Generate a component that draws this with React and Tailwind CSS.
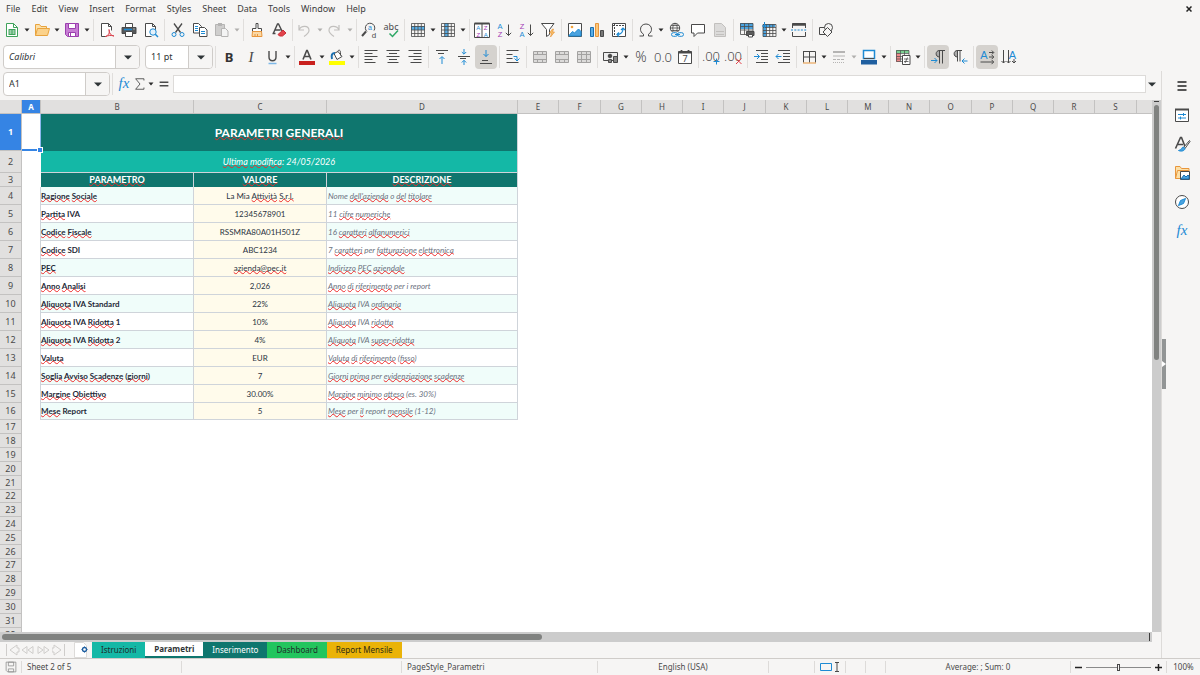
import { useState } from "react";
import clsx from "clsx";

const MENUS = ["File", "Edit", "View", "Insert", "Format", "Styles", "Sheet", "Data", "Tools", "Window", "Help"];

// "~" marks a word that the spell checker underlines
const ROWS = [
  ["~Ragione ~Sociale", "La Mia ~Attività ~S.r.l.", "Nome ~dell'azienda o ~del ~titolare"],
  ["~Partita IVA", "12345678901", "11 ~cifre ~numeriche"],
  ["~Codice ~Fiscale", "RSSMRA80A01H501Z", "16 ~caratteri ~alfanumerici"],
  ["~Codice SDI", "ABC1234", "7 ~caratteri per ~fatturazione ~elettronica"],
  ["~PEC", "~azienda@pec.it", "~Indirizzo ~PEC ~aziendale"],
  ["~Anno ~Analisi", "2,026", "~Anno ~di ~riferimento per i report"],
  ["~Aliquota IVA Standard", "22%", "~Aliquota IVA ~ordinaria"],
  ["~Aliquota IVA ~Ridotta 1", "10%", "~Aliquota IVA ~ridotta"],
  ["~Aliquota IVA ~Ridotta 2", "4%", "~Aliquota IVA ~super-ridotta"],
  ["~Valuta", "EUR", "~Valuta ~di ~riferimento (~fisso)"],
  ["~Soglia ~Avviso ~Scadenze (~giorni)", "7", "~Giorni ~prima per ~evidenziazione ~scadenze"],
  ["~Margine ~Obiettivo", "30.00%", "~Margine ~minimo ~atteso (es. 30%)"],
  ["~Mese Report", "5", "~Mese per ~il report ~mensile (1-12)"],
];

const COLUMNS = "ABCDEFGHIJKLMNOPQRST".split("");
const LAST_ROW = 32;

// sheet sizes are kept in twips, edges are snapped to whole pixels
const SCALE = 0.0459;
const COL_TWIPS = { A: 414, B: 3330, C: 2896, D: 4172 };
const ROW_TWIPS = { 1: 806, 2: 488, 3: 300 };

const colTwips = (c) => COL_TWIPS[c] || 898;
const rowTwips = (r) => ROW_TWIPS[r] || (r <= 16 ? 391 : 301);

function snap(sizes) {
  let sum = 0;
  return sizes.map((s) => {
    const from = Math.round(sum * SCALE);
    sum += s;
    return Math.round(sum * SCALE) - from;
  });
}

const COL_PX = snap(COLUMNS.map(colTwips));
const ROW_PX = snap(Array.from({ length: LAST_ROW }, (_, i) => rowTwips(i + 1)));
const HEAD_W = 22;
const TABLE_W = COL_PX.reduce((a, b) => a + b, HEAD_W);

const K = "#4a4a4a";
const B = "#1e8bd4";

function Svg({ size = 16, children }) {
  return (
    <svg width={size} height={size} viewBox="0 0 16 16" fill="none" stroke={K} strokeWidth="1" aria-hidden="true" className="shrink-0 overflow-visible">
      {children}
    </svg>
  );
}

function Glyph({ x = 8, y = 13, size = 14, fill = K, children, ...rest }) {
  return (
    <text x={x} y={y} fontSize={size} fill={fill} stroke="none" textAnchor="middle" fontFamily="Noto Sans, sans-serif" {...rest}>
      {children}
    </text>
  );
}

function Letter(props) {
  return <Glyph fontFamily="Liberation Sans, sans-serif" {...props} />;
}

const gridLines = "M1.5 1.5h13v13h-13zM1.5 4.5h13M1.5 8h13M1.5 11.5h13M4.7 1.5v13M8 1.5v13M11.3 1.5v13";

const ICONS = {
  new: (
    <>
      <path d="M2.5 1.5h7l4 4v9h-11z" fill="#fff" stroke="#3fa35b" />
      <path d="M9.5 1.5v4h4" stroke="#3fa35b" />
      <path d="M4.5 7h7v6h-7z" fill="#3fa35b" stroke="none" />
      <path d="M5.5 9h2M8.5 9h2M5.5 11h2M8.5 11h2" stroke="#fff" />
    </>
  ),
  open: (
    <>
      <path d="M1.5 13.5v-11h4l1.5 2h5.5v2" fill="#fce0a8" stroke="#e8a33d" />
      <path d="M1.5 13.5l2-7h12l-2 7z" fill="#fbd28b" stroke="#e8a33d" />
    </>
  ),
  save: (
    <>
      <path d="M1.5 1.5h13v13h-11l-2-2z" fill="#c77dd4" stroke="#9b3fae" />
      <path d="M4.5 1.5h7v5h-7z" fill="#fff" stroke="#9b3fae" />
      <path d="M4.5 10.5h7v4h-7z" fill="#fff" stroke="#9b3fae" />
      <path d="M6.5 11v3" stroke="#9b3fae" />
    </>
  ),
  pdf: (
    <>
      <path d="M7.5 14.5h-5v-13h7l3 3v4" fill="#fff" />
      <path d="M9.5 1.5v3h3" />
      <path d="M6.5 14.5c3-1 4.5-4 3.5-7c0 4 2 6 5 6.500c-3-1-6-.5-8.500.5z" stroke="#d9434e" fill="#f6c8cb" />
    </>
  ),
  print: (
    <>
      <path d="M4.5 1.5h7v4h-7z" fill="#fff" />
      <path d="M1 5.500h14v6h-14z" fill="#55585a" />
      <path d="M3 7.500h8" stroke={B} strokeWidth="1.5" />
      <path d="M4.500 9.500h7v5h-7z" fill="#fff" />
      <path d="M12.500 7h1" stroke="#fff" />
    </>
  ),
  preview: (
    <>
      <path d="M8.500 14.500h-6v-13h7l3 3v4" fill="#fff" />
      <path d="M9.500 1.500v3h3" />
      <circle cx="10" cy="10" r="3.2" stroke={B} fill="#e3f1fb" />
      <path d="M12.300 12.300l2.700 2.700" stroke={B} strokeWidth="1.5" />
    </>
  ),
  cut: (
    <>
      <path d="M4 1.500l6.500 9M12 1.500l-6.500 9" strokeWidth="1.3" />
      <circle cx="4" cy="12.5" r="2" stroke={B} />
      <circle cx="12" cy="12.5" r="2" stroke={B} />
    </>
  ),
  copy: (
    <>
      <path d="M1.500 1.500h5l3 3v6.500h-8z" fill="#fff" />
      <path d="M3 4.500h3M3 6.500h3M3 8.500h3" stroke={B} />
      <path d="M7.500 5.500h5l2.500 2.500v6.500h-7.500z" fill="#fff" />
      <path d="M9 9.500h4M9 11.500h4" stroke={B} />
    </>
  ),
  paste: (
    <>
      <path d="M1.500 2.500h9v11h-9z" fill="#cfcecd" stroke="#b5b4b3" />
      <path d="M4 1h4v3h-4z" fill="#b5b4b3" stroke="none" />
      <path d="M7.500 6.500h4l2.500 2.500v5.500h-6.500z" fill="#f4f4f4" stroke="#b5b4b3" />
    </>
  ),
  brush: (
    <>
      <path d="M7 1.500h2v5h3.500v3h-9v-3h3.500z" fill="#fff" />
      <path d="M3.500 9.500h9l.5 5h-10z" fill="#fbd9a6" stroke="#e8963c" />
      <path d="M6 12v2M8.500 12v2" stroke="#e8963c" />
    </>
  ),
  clear: (
    <>
      <path d="M2.500 11l4-9h1l3.500 7M4 8h5.500M1.500 11.500h3" strokeWidth="1.4" />
      <path d="M7 12.500l5-4.500l3 3l-3.500 3h-3z" fill="#e2434b" stroke="#c92d36" />
    </>
  ),
  undo: <path d="M2 3v5h5M2 8c2-5 10-5 10 .5c0 2-2 4-5 6" stroke="#c2c0be" strokeWidth="1.2" />,
  redo: <path d="M12 3v5h-5M12 8c-2-5-10-5-10 .5c0 2 2 4 5 6" stroke="#c2c0be" strokeWidth="1.2" />,
  find: (
    <>
      <path d="M5 9.500l-4 4.500" strokeWidth="2" />
      <path d="M6 9.500a4.700 4.700 0 1 1 7-1" />
      <Letter x={9} y={8} size={7} fill={B}>a</Letter>
      <Letter x={13} y={15.5} size={8}>d</Letter>
    </>
  ),
  spell: (
    <>
      <Glyph x={8} y={8} size={9}>abc</Glyph>
      <path d="M6.500 11.500l3 3l5.500-6" stroke="#2fa866" strokeWidth="1.5" />
    </>
  ),
  rows: (
    <>
      <path d="M1 4h14v4h-14z" fill="#5aaee6" stroke="none" />
      <path d={gridLines} strokeWidth=".8" />
    </>
  ),
  cols: (
    <>
      <path d="M4.500 1h4v14h-4z" fill="#5aaee6" stroke="none" />
      <path d={gridLines} strokeWidth=".8" />
    </>
  ),
  sort: (
    <>
      <path d="M.5 1.500h15v14h-15zM8 1.500v14" fill="#fff" />
      <path d="M.5 1.500h15" strokeWidth="2" />
      <Letter x={4.300} y={8} size={6} fill={B}>A</Letter>
      <Letter x={4.300} y={15} size={6} fill="#a33bb5">Z</Letter>
      <Letter x={11.700} y={8} size={6} fill="#a33bb5">Z</Letter>
      <Letter x={11.700} y={15} size={6} fill={B}>A</Letter>
    </>
  ),
  asc: (
    <>
      <Letter x={4} y={6.500} size={7.500} fill={B}>A</Letter>
      <Letter x={4} y={15.200} size={7.500} fill="#a33bb5">Z</Letter>
      <path d="M12.500 2.500v11M9.800 10.800l2.700 2.700l2.700-2.700" />
    </>
  ),
  desc: (
    <>
      <Letter x={4} y={6.500} size={7.500} fill="#a33bb5">Z</Letter>
      <Letter x={4} y={15.200} size={7.500} fill={B}>A</Letter>
      <path d="M12.500 2.500v11M9.800 10.800l2.700 2.700l2.700-2.700" />
    </>
  ),
  filter: (
    <>
      <path d="M1.500 1.500h12.500l-4.500 6v5l-3 2v-7z" fill="#fff" />
      <path d="M12.500 7l-3 4h2l-1 4l4-5h-2l1-3z" fill="#f7c06a" stroke="#e8963c" strokeWidth=".7" />
    </>
  ),
  image: (
    <>
      <path d="M1.500 1.500h13v13h-13z" fill="#fff" />
      <circle cx="5" cy="5" r="1.3" fill="#f2a33c" stroke="none" />
      <path d="M2 13.500l3.500-4l2 1.500l4-4l2.500 2.500v4.500h-12z" fill="#4ba3df" stroke={B} />
    </>
  ),
  chart: (
    <>
      <path d="M1.500 5.500h3v9h-3z" fill="#5aaee6" stroke="#1b6fb0" />
      <path d="M6.500 1.500h3v13h-3z" fill="#fbc77b" stroke="#e8963c" />
      <path d="M11.500 8.500h3v6h-3z" fill="#777" />
    </>
  ),
  pivot: (
    <>
      <path d="M1.500 1.500h13v13h-13z" fill="#fff" />
      <path d="M2 3.500h12.500M3.500 2v12.500" strokeDasharray="2 1" />
      <path d="M6 12.500c4 0 6-2 6-6M10 8l2-2l2 2M8 10.500l-2 2l2 2" stroke={B} strokeWidth="1.2" />
    </>
  ),
  omega: <path d="M1.500 14h4v-1.800c-2-1.200-3-3-3-5c0-3 2.300-5.200 5.500-5.200s5.500 2.200 5.500 5.200c0 2-1 3.800-3 5v1.800h4" />,
  link: (
    <>
      <circle cx="7" cy="6" r="4.7" />
      <path d="M2.300 6h9.400M7 1.300c-3 3-3 6.500 0 9.400M7 1.300c3 3 3 6.500 0 9.400M3.200 3.500h7.600M3.200 8.500h7.600" strokeWidth=".8" />
      <path d="M4 10h11v5h-11z" fill="#f6f5f4" stroke="none" />
      <rect x="3.5" y="10.7" width="6" height="3.6" rx="1.8" stroke={B} />
      <rect x="9.5" y="10.7" width="6" height="3.6" rx="1.8" stroke={B} />
      <path d="M7 12.500h5" stroke={B} />
    </>
  ),
  comment: <path d="M1.500 2.500h13v8.500h-7l-3.500 3.500v-3.500h-2.500z" fill="#fff" />,
  header: (
    <>
      <path d="M2.500 1.500h7l4 4v9h-11z" fill="#dcdbda" stroke="#c2c0be" />
      <path d="M4 9.500h8M4 12.500h8" stroke="#c2c0be" />
    </>
  ),
  printArea: (
    <>
      <path d="M1 1h13v6h-13z" fill="#4ba3df" stroke="none" />
      <path d="M1.500 1.500h12.500v11h-12.500zM1.500 4.500h12.500M1.500 8h12.500M5.500 1.500v11M9.700 1.500v11" strokeWidth=".8" />
      <path d="M7.500 9.500h7.500v4h-7.500z" fill="#5b5b5b" />
      <path d="M9.500 12.500h4v2.500h-4z" fill="#fff" />
    </>
  ),
  freeze: (
    <>
      <path d="M2 2h3v13h-3zM5 2h9v3h-9z" fill="#4ba3df" stroke="none" />
      <path d="M2 2.500h13v12h-13zM2 5.500h13M2 8.500h13M2 11.500h13M5.500 2.500v12M8.700 2.500v12M11.800 2.500v12" strokeWidth=".8" />
      <path d="M3.500 0v6M1 4h5" stroke={B} />
    </>
  ),
  split: (
    <>
      <path d="M1.500 6v-4.500h13v4.500M1.500 10v4.500h13v-4.500" />
      <path d="M1.500 2.500h13" strokeWidth="2.5" />
      <path d="M0 8h16" stroke={B} strokeDasharray="2 1.3" />
    </>
  ),
  shapes: (
    <>
      <path d="M1.500 5.500h7v7h-7z" fill="#f6f5f4" />
      <circle cx="10.5" cy="5.5" r="4" fill="#f6f5f4" />
      <path d="M9.500 5.500l4.500 4.500l-4.500 4.500l-4.500-4.500z" fill="#f6f5f4" />
    </>
  ),
  bold: <Glyph size={13} y={12.5} fontWeight="700" fill="#333">B</Glyph>,
  italic: <Glyph size={15} y={12.5} fontStyle="italic" fontFamily="Liberation Serif, serif">I</Glyph>,
  underline: (
    <>
      <path d="M4 2v6c0 5 7 5 7 0v-6" strokeWidth="1.4" />
      <path d="M3.500 14.500h8" stroke="#7db8e8" strokeWidth="1.5" />
    </>
  ),
  fontColor: (
    <>
      <path d="M4 10.500l3.700-9h.6l3.700 9M5.500 7.500h5" strokeWidth="1.6" />
      <path d="M0 12h16v4h-16z" fill="#c9211e" stroke="none" />
    </>
  ),
  fill: (
    <>
      <path d="M5 4.500l4-2l4 5l-5 3z" fill="#fff" />
      <path d="M9 2.500c0-2 2.500-2 2.500 1v3" />
      <path d="M3 10c-1-4 0-6 3-6" stroke="#1b6fb0" strokeWidth="2" />
      <path d="M0 12h16v4h-16z" fill="#ffff00" stroke="none" />
    </>
  ),
  left: <path d="M1.500 1.500h13M1.500 4.500h8M1.500 7.500h13M1.500 10.500h8M1.500 13.500h11" />,
  center: <path d="M1.500 1.500h13M4 4.500h8M1.500 7.500h13M4 10.500h8M2.500 13.500h11" />,
  right: <path d="M1.500 1.500h13M6.500 4.500h8M1.500 7.500h13M6.500 10.500h8M3.500 13.500h11" />,
  top: (
    <>
      <path d="M2 1.500h12M4 4.500h6" />
      <path d="M8 15v-7M5.500 10l2.500-2.500l2.500 2.500" stroke={B} />
    </>
  ),
  middle: (
    <>
      <path d="M2 7.500h12M4 9.500h6" />
      <path d="M8 0v5M5.800 3l2.200 2.200l2.200-2.200M8 16v-4.500M5.800 13.500l2.200-2.200l2.200 2.200" stroke={B} />
    </>
  ),
  bottom: (
    <>
      <path d="M4 11.500h6M2 14.500h12" />
      <path d="M8 1v6.500M5.500 5l2.500 2.500l2.500-2.500" stroke={B} />
    </>
  ),
  wrap: (
    <>
      <path d="M1.500 1.500h12M1.500 5.500h6M1.500 9.500h6M1.500 13.500h12" />
      <path d="M8.500 7.500h3.500v4M9.500 9.500l2.500 2.500l2.500-2.500" stroke={B} />
    </>
  ),
  merge: (
    <>
      <path d="M1.500 2.500h13v11h-13z" fill="#dcdbda" stroke="#a3a2a1" />
      <path d="M1.500 5.500h13M1.500 10.500h13M5.500 2.500v3M10.500 2.500v3M5.500 10.500v3M10.500 10.500v3" stroke="#a3a2a1" />
    </>
  ),
  unmerge: (
    <>
      <path d="M1.500 2.500h13v11h-13z" fill="#dcdbda" stroke="#a3a2a1" />
      <path d="M1.500 5.500h13M1.500 10.500h13M5.500 2.500v11M10.500 2.500v11" stroke="#a3a2a1" />
    </>
  ),
  currency: (
    <>
      <path d="M.5 3.500h14v8h-14z" fill="#eee" />
      <circle cx="7" cy="7" r="1.8" fill={K} />
      <path d="M10.500 7.500h4v6h-4z" fill="#888" />
      <path d="M5.500 10.500h3v3h-3z" fill="#888" />
    </>
  ),
  percent: <Glyph size={14} y={13} fontWeight="300">%</Glyph>,
  number: <Glyph size={13} y={13} fontWeight="300">0.0</Glyph>,
  date: (
    <>
      <path d="M1.500 2.500h13v12h-13z" fill="#fff" />
      <path d="M1.500 3.500h13M4.500 1v3M11.500 1v3" strokeWidth="1.8" />
      <Glyph size={9} y={13}>7</Glyph>
    </>
  ),
  addDec: (
    <>
      <Glyph size={13} x={7} y={12} fontWeight="300">.00</Glyph>
      <path d="M9.500 12.500h6M12.500 9.500v6" stroke={B} />
    </>
  ),
  delDec: (
    <>
      <Glyph size={13} x={7} y={12} fontWeight="300">.00</Glyph>
      <path d="M10 9.500l5.500 5.500M15.500 9.500l-5.500 5.500" stroke="#e2434b" />
    </>
  ),
  indent: (
    <>
      <path d="M3 1.500h12M8 4.500h7M8 7.500h7M8 10.500h7M3 13.500h12" />
      <path d="M1 7.500h5.500M4 5l2.500 2.500l-2.500 2.500" stroke={B} />
    </>
  ),
  outdent: (
    <>
      <path d="M3 1.500h12M8 4.500h7M8 7.500h7M8 10.500h7M3 13.500h12" />
      <path d="M1 7.500h5.500M3.500 5l-2.500 2.500l2.500 2.500" stroke={B} />
    </>
  ),
  borders: (
    <>
      <path d="M2 2.500h12.500v11M2.500 2.500v11M8.500 2.500v11M2.500 8h12" />
      <path d="M2 14h13" stroke="#e8963c" />
    </>
  ),
  lineStyle: (
    <>
      <path d="M2 3h12" stroke="#b5b4b3" strokeWidth="2" />
      <path d="M2 7h12" stroke="#b5b4b3" />
      <path d="M2 10.500h12" stroke="#b5b4b3" strokeDasharray="3 1" />
      <path d="M2 13.500h12" stroke="#b5b4b3" strokeDasharray="1 1" />
    </>
  ),
  lineColor: (
    <>
      <path d="M2.500 1.500h11v8h-11z" fill="#fff" stroke={B} strokeWidth="1.5" />
      <path d="M3 9.500h10" />
      <path d="M0 11h16v4.500h-16z" fill="#1f5fa0" stroke="none" />
    </>
  ),
  conditional: (
    <>
      <path d="M1 1h13v3h-13z" fill="#7ccf93" stroke="none" />
      <path d="M1 4h4v9h-4z" fill="#ef8a8a" stroke="none" />
      <path d="M1.500 1.500h12.500v11h-12.500zM1.500 4.500h12.500M1.500 7.500h12.500M1.500 10h12.500M5.500 1.500v11M9.500 1.500v11" strokeWidth=".7" />
      <path d="M7.500 6.500h7.500v9h-7.500z" fill="#fff" />
      <path d="M9 10h4.500M9 12.500h4.500M12.500 8.500l-2.500 5.500" strokeWidth=".8" />
    </>
  ),
  ltr: (
    <>
      <path d="M9.500 1.500c-4.500 0-4.500 6.500 0 6.500z" fill="#aaa" />
      <path d="M9 1.500h6M9.500 1.500v13M12.500 1.500v13" />
      <path d="M1 11.500h6M4.500 9l2.500 2.500l-2.500 2.500" stroke={B} />
    </>
  ),
  rtl: (
    <>
      <path d="M5.500 1.500c-4.500 0-4.500 6.500 0 6.500z" fill="#aaa" />
      <path d="M5 1.500h5M5.500 1.500v11M8 1.500v11" />
      <path d="M15.500 12h-5M12.500 9.500l-2.500 2.500l2.500 2.500" stroke={B} />
    </>
  ),
  textH: (
    <>
      <Letter x={5} y={9.500} size={11} fill={B}>A</Letter>
      <path d="M10 3.500h4.500M12.800 1.500l2 2l-2 2M10 8h4.500M12.800 6l2 2l-2 2M1.500 13h13M12.500 10.800l2.200 2.200l-2.200 2.200" />
    </>
  ),
  textV: (
    <>
      <Letter x={11.500} y={9.500} size={11} fill={B}>A</Letter>
      <path d="M2.500 1v13M.5 12l2 2l2-2M7.500 1v13M5.500 12l2 2l2-2M13 10v4M11 12l2 2l2-2" />
    </>
  ),
  fx: <Glyph size={15} y={12} fill={B} fontStyle="italic" fontFamily="Liberation Serif, serif">fx</Glyph>,
  sum: <path d="M12.500 4v-2h-9.500l5 6l-5 6h9.500v-2" />,
  equal: <path d="M3 6h10M3 10h10" strokeWidth="1.8" />,
  menu: <path d="M3.500 4h9M3.500 8h9M3.500 12h9" stroke="#222" strokeWidth="1.5" />,
  properties: (
    <>
      <path d="M1.500 2.500h13v12h-13z" fill="#fff" />
      <path d="M1 2.500h14" strokeWidth="2" />
      <path d="M4 7.500h8M4 11h8M9.500 6v3M6.500 9.500v3" stroke={B} />
    </>
  ),
  styles: (
    <>
      <path d="M1.500 12.500l5-11h1l3.500 9M4 8.500h5" strokeWidth="1.6" />
      <path d="M15.500 4.500l-6 7l1.500 1l5-7z" fill="#fff" />
      <path d="M9.500 11c-2 0-1.500 3-5 3.500c3 1.500 6.500 0 6.500-2z" fill="#4ba3df" stroke={B} />
    </>
  ),
  gallery: (
    <>
      <path d="M1.500 13.500v-12h4.500l1.500 2h7.500v3M1.500 13.500l2-8h11v8z" fill="#fce0a8" stroke="#e8963c" />
      <path d="M6.500 6.500h9v8h-9z" fill="#fff" />
      <path d="M7 14l3-4l2 2l2-2l1 1v3z" fill="#4ba3df" stroke="#1b6fb0" />
    </>
  ),
  navigator: (
    <>
      <circle cx="8" cy="8" r="6.5" fill="#fff" />
      <path d="M11.500 4.500l-2 5l-5 2l2-5z" fill="#4ba3df" stroke={B} />
    </>
  ),
};

function Caret({ dim = false }) {
  return (
    <svg width="6" height="4" viewBox="0 0 6 4" aria-hidden="true" className="shrink-0">
      <path d="M.5 .5h5l-2.500 3z" fill={dim ? "#b0afad" : "#2b2b2b"} />
    </svg>
  );
}

function Tool({ icon, label, drop = false, active = false, disabled = false }) {
  return (
    <div className="flex h-6 shrink-0">
      <button
        type="button"
        aria-label={label}
        aria-pressed={active || undefined}
        disabled={disabled}
        className={clsx("flex w-[22px] items-center justify-center rounded", active && "bg-[#d5d2ce]")}
      >
        <Svg>{ICONS[icon]}</Svg>
      </button>
      {drop ? (
        <button type="button" aria-label={`${label} options`} disabled={disabled} className="flex w-2 items-center justify-center">
          <Caret dim={disabled} />
        </button>
      ) : null}
    </div>
  );
}

function Sep({ tight = false }) {
  return (
    <div className={clsx("flex h-[22px] shrink-0 justify-center", tight ? "w-1" : "w-[5px]")}>
      <div className="w-px bg-[#e0dedc]" />
    </div>
  );
}

function Combo({ label, value, width, italic = false }) {
  const [text, setText] = useState(value);
  return (
    <div className={clsx("flex h-6 shrink-0 overflow-hidden rounded border border-[#cfccc9] bg-white", width)}>
      <input
        aria-label={label}
        value={text}
        onChange={(e) => setText(e.target.value)}
        className={clsx("min-w-0 flex-1 px-[5px] text-[9px] text-[#2e3436] outline-none", italic && "italic")}
      />
      <button type="button" aria-label={`${label} list`} className="flex w-6 items-center justify-center border-l border-[#cfccc9] bg-[#f6f5f4]">
        <svg width="8" height="5" viewBox="0 0 8 5" aria-hidden="true">
          <path d="M0 .5h8l-4 4z" fill="#2e3436" />
        </svg>
      </button>
    </div>
  );
}

function StandardBar() {
  return (
    <div role="toolbar" aria-label="Standard" className="flex h-[26px] items-center pl-px">
      <Tool icon="new" label="New" drop />
      <Tool icon="open" label="Open" drop />
      <Tool icon="save" label="Save" drop />
      <Sep />
      <Tool icon="pdf" label="Export as PDF" />
      <Tool icon="print" label="Print" />
      <Tool icon="preview" label="Print preview" />
      <Sep />
      <Tool icon="cut" label="Cut" />
      <Tool icon="copy" label="Copy" />
      <Tool icon="paste" label="Paste" drop disabled />
      <Sep />
      <Tool icon="brush" label="Clone formatting" />
      <Tool icon="clear" label="Clear formatting" />
      <Sep tight />
      <Tool icon="undo" label="Undo" drop disabled />
      <Tool icon="redo" label="Redo" drop disabled />
      <Sep tight />
      <Tool icon="find" label="Find and replace" />
      <Tool icon="spell" label="Spelling" />
      <Sep />
      <Tool icon="rows" label="Row" drop />
      <Tool icon="cols" label="Column" drop />
      <Sep tight />
      <Tool icon="sort" label="Sort" />
      <Tool icon="asc" label="Sort ascending" />
      <Tool icon="desc" label="Sort descending" />
      <Tool icon="filter" label="AutoFilter" />
      <Sep />
      <Tool icon="image" label="Insert image" />
      <Tool icon="chart" label="Insert chart" />
      <Tool icon="pivot" label="Pivot table" />
      <Sep />
      <Tool icon="omega" label="Special character" drop />
      <Tool icon="link" label="Hyperlink" />
      <Tool icon="comment" label="Comment" />
      <Tool icon="header" label="Headers and footers" disabled />
      <Sep />
      <Tool icon="printArea" label="Define print area" />
      <Tool icon="freeze" label="Freeze rows and columns" drop />
      <Tool icon="split" label="Split window" />
      <Sep />
      <Tool icon="shapes" label="Draw functions" />
    </div>
  );
}

function FormattingBar() {
  return (
    <div role="toolbar" aria-label="Formatting" className="flex h-7 items-center pl-[3px]">
      <Combo label="Font name" value="Calibri" width="w-[137px]" italic />
      <div className="w-[5px] shrink-0" />
      <Combo label="Font size" value="11 pt" width="w-[68px]" />
      <Sep />
      <Tool icon="bold" label="Bold" />
      <Tool icon="italic" label="Italic" />
      <Tool icon="underline" label="Underline" drop />
      <Sep tight />
      <Tool icon="fontColor" label="Font color" drop />
      <Tool icon="fill" label="Background color" drop />
      <Sep tight />
      <Tool icon="left" label="Align left" />
      <Tool icon="center" label="Align center" />
      <Tool icon="right" label="Align right" />
      <Sep />
      <Tool icon="top" label="Align top" />
      <Tool icon="middle" label="Center vertically" />
      <Tool icon="bottom" label="Align bottom" active />
      <Sep />
      <Tool icon="wrap" label="Wrap text" />
      <Sep />
      <Tool icon="merge" label="Merge and center" disabled />
      <Tool icon="merge" label="Merge cells" disabled />
      <Tool icon="unmerge" label="Unmerge cells" disabled />
      <Sep />
      <Tool icon="currency" label="Currency" drop />
      <Tool icon="percent" label="Percent" />
      <Tool icon="number" label="Number" />
      <Tool icon="date" label="Date" />
      <Sep />
      <Tool icon="addDec" label="Add decimal place" />
      <Tool icon="delDec" label="Delete decimal place" />
      <Sep />
      <Tool icon="indent" label="Increase indent" />
      <Tool icon="outdent" label="Decrease indent" />
      <Sep tight />
      <Tool icon="borders" label="Borders" drop />
      <Tool icon="lineStyle" label="Border style" drop disabled />
      <Tool icon="lineColor" label="Border color" drop />
      <Sep tight />
      <Tool icon="conditional" label="Conditional formatting" drop />
      <Sep />
      <Tool icon="ltr" label="Left to right" active />
      <Tool icon="rtl" label="Right to left" />
      <Sep />
      <Tool icon="textH" label="Text direction horizontal" active />
      <Tool icon="textV" label="Text direction vertical" />
    </div>
  );
}

function FormulaBar() {
  return (
    <div className="flex h-[29px] items-center pb-[3px] pl-[3px]">
      <Combo label="Name box" value="A1" width="w-[107px]" />
      <Sep />
      <div className="flex h-6 shrink-0 items-center">
        <button type="button" aria-label="Function wizard" className="flex w-[18px] justify-center">
          <Svg>{ICONS.fx}</Svg>
        </button>
        <button type="button" aria-label="Select function" className="flex w-[14px] justify-center">
          <Svg size={14}>{ICONS.sum}</Svg>
        </button>
        <button type="button" aria-label="Function list" className="flex w-2 justify-center">
          <Caret />
        </button>
        <button type="button" aria-label="Formula" className="flex w-[18px] justify-center">
          <Svg size={14}>{ICONS.equal}</Svg>
        </button>
      </div>
      <input aria-label="Formula input" className="h-[18px] min-w-0 flex-1 border border-[#dddbd9] bg-white px-1 text-[9px] outline-none" />
      <button type="button" aria-label="Expand formula bar" className="flex w-[15px] shrink-0 justify-center pr-1">
        <svg width="8" height="5" viewBox="0 0 8 5" aria-hidden="true">
          <path d="M0 .5h8l-4 4z" fill="#2e3436" />
        </svg>
      </button>
    </div>
  );
}

function Spelled({ text }) {
  return text.split(/(~[\p{L}'@.-]+)/u).map((part, i) =>
    part.startsWith("~") ? (
      <span key={i} className="underline decoration-[#ef2929] decoration-wavy decoration-1 underline-offset-[-1px] [text-decoration-skip-ink:none]">
        {part.slice(1)}
      </span>
    ) : (
      part
    )
  );
}

function RowHead({ n }) {
  return (
    <th
      scope="row"
      className={clsx(
        "border-r border-b border-[#c3c2c1] p-0 text-center font-['Noto_Sans',sans-serif] text-[9px] leading-3",
        n === 1 ? "bg-[#3584e4] font-bold text-white" : "bg-[#e1e0df] font-normal text-[#4a4a4a]"
      )}
    >
      {n}
    </th>
  );
}

function SheetRow({ n, children }) {
  return (
    <tr style={{ height: ROW_PX[n - 1] }}>
      <RowHead n={n} />
      {children}
    </tr>
  );
}

function Sheet() {
  const rest = COLUMNS.length - 4;
  const line = "border-r border-b border-[#cfd4da] py-0 leading-3";
  return (
    <table className="table-fixed border-separate border-spacing-0 font-[Lato,sans-serif] text-[8px]" style={{ width: TABLE_W }}>
      <colgroup>
        <col style={{ width: HEAD_W }} />
        {COLUMNS.map((c, i) => (
          <col key={c} style={{ width: COL_PX[i] }} />
        ))}
      </colgroup>
      <thead>
        <tr className="h-[14px] font-['Noto_Sans',sans-serif] text-[8px] leading-3">
          <td className="border-r border-b border-[#c3c2c1] bg-[#e1e0df] p-0" />
          {COLUMNS.map((c) => (
            <th
              key={c}
              scope="col"
              className={clsx(
                "border-r border-b border-[#c3c2c1] p-0 text-center",
                c === "A" ? "bg-[#3584e4] font-bold text-white" : "bg-[#e1e0df] font-normal text-[#4a4a4a]"
              )}
            >
              {c}
            </th>
          ))}
        </tr>
      </thead>
      <tbody>
        <SheetRow n={1}>
          <td className="relative border-r border-b-2 border-r-[#8db8ee] border-b-[#3584e4] p-0">
            <span className="absolute -right-[3px] -bottom-1 box-content size-1 border border-white bg-[#3584e4]" />
          </td>
          <td colSpan={3} className="border-r border-[#cfd4da] bg-[#0f766e] p-0 text-center text-[12px] leading-4 font-bold text-white">
            <Spelled text="~PARAMETRI ~GENERALI" />
          </td>
          <td colSpan={rest} />
        </SheetRow>
        <SheetRow n={2}>
          <td />
          <td colSpan={3} className="border-r border-b border-[#cfd4da] bg-[#14b8a6] p-0 text-center text-[9px] leading-3 text-white italic">
            <Spelled text="~Ultima ~modifica: 24/05/2026" />
          </td>
          <td colSpan={rest} />
        </SheetRow>
        <SheetRow n={3}>
          <td />
          {["~PARAMETRO", "~VALORE", "~DESCRIZIONE"].map((t) => (
            <td key={t} className="border-r border-[#cfd4da] bg-[#0f766e] p-0 text-center text-[9px] leading-3 font-bold text-white">
              <Spelled text={t} />
            </td>
          ))}
          <td colSpan={rest} />
        </SheetRow>
        {ROWS.map(([name, value, note], i) => (
          <SheetRow key={name} n={i + 4}>
            <td className="border-r border-[#cfd4da]" />
            <td className={clsx(line, "px-0 text-left font-bold text-[#1f2937]", i % 2 === 0 && "bg-[#f0fdfa]")}>
              <Spelled text={name} />
            </td>
            <td className={clsx(line, "bg-[#fffbeb] px-px text-center text-[#2b3442]")}>
              <Spelled text={value} />
            </td>
            <td className={clsx(line, "px-px text-left text-[#6b7280] italic", i % 2 === 0 && "bg-[#f0fdfa]")}>
              <Spelled text={note} />
            </td>
            <td colSpan={rest} />
          </SheetRow>
        ))}
        {Array.from({ length: LAST_ROW - 16 }, (_, i) => (
          <SheetRow key={i} n={i + 17}>
            <td colSpan={COLUMNS.length} className="p-0" />
          </SheetRow>
        ))}
      </tbody>
    </table>
  );
}

const TABS = [
  { name: "Istruzioni", style: "bg-[#14b8a6] text-[#1f2d2b]" },
  { name: "Parametri", style: "border-b-2 border-[#0f766e] bg-white font-bold text-[#2e3436]" },
  { name: "Inserimento", style: "bg-[#0f766e] text-white" },
  { name: "Dashboard", style: "bg-[#22c55e] text-[#1f2d2b]" },
  { name: "Report Mensile", style: "bg-[#eab308] text-[#2e2a14]" },
];

const NAV = [
  ["First sheet", "M2.500 1v12M13 2l-7 5l7 5v-3h2v-4h-2z"],
  ["Previous sheet", "M7 3.500l-5 3.500l5 3.500zM13 3.500l-5 3.500l5 3.500z"],
  ["Next sheet", "M2 3.500l5 3.500l-5 3.500zM8 3.500l5 3.500l-5 3.500z"],
  ["Last sheet", "M12.500 1v12M2 2l7 5l-7 5v-3h-2v-4h2z"],
];

function SheetTabs() {
  return (
    <div className="flex h-4 items-stretch">
      <div className="flex w-[74px] shrink-0 items-center pl-1">
        {NAV.map(([label, d]) => (
          <button key={label} type="button" aria-label={label} disabled className="flex">
            <svg width="16" height="14" viewBox="0 0 16 14" fill="none" stroke="#cfcdcb" aria-hidden="true">
              <path d={d} />
            </svg>
          </button>
        ))}
      </div>
      <button type="button" aria-label="Add sheet" className="flex w-[18px] shrink-0">
        <svg width="15" height="16" viewBox="0 0 15 16" fill="none" aria-hidden="true">
          <path d="M.5 .5h9l3 3v12h-12z" fill="#fff" stroke="#dddbd9" />
          <circle cx="10.5" cy="7.5" r="2" stroke="#1f5fa0" strokeWidth="1.3" />
          <path d="M10.500 4.500v1M10.500 9.500v1M7.500 7.500h1M12.500 7.500h1" stroke="#1f5fa0" />
        </svg>
      </button>
      <div role="tablist" aria-label="Sheets" className="flex">
        {TABS.map((t) => (
          <button
            key={t.name}
            type="button"
            role="tab"
            aria-selected={t.name === "Parametri"}
            className={clsx("flex items-center justify-center px-[9px] text-[8px] leading-3", t.style)}
          >
            {t.name}
          </button>
        ))}
      </div>
    </div>
  );
}

function StatusBar() {
  const [zoom, setZoom] = useState(100);
  const cell = "flex h-3 shrink-0 items-center border-r border-[#dddbd9]";
  return (
    <footer className="flex h-[17px] shrink-0 items-center border-t border-[#cfccc9] text-[8px] text-[#4a4a4a]">
      <div className={clsx(cell, "w-[22px] justify-center")}>
        <Svg size={12}>
          <path d="M1.500 1.500h13v13h-11l-2-2zM4.500 1.500h7v5h-7zM4.500 10.500h7v4h-7z" stroke="#8a8a8a" />
        </Svg>
      </div>
      <div className={clsx(cell, "w-40 pl-[5px]")}>Sheet 2 of 5</div>
      <div className={clsx(cell, "w-[220px]")} />
      <div className={clsx(cell, "w-[196px] pl-[5px]")}>PageStyle_Parametri</div>
      <div className={clsx(cell, "w-[171px] justify-center")}>English (USA)</div>
      <div className={clsx(cell, "w-[46px]")} />
      <div className={clsx(cell, "w-[31px] justify-center")}>
        <svg width="20" height="12" viewBox="0 0 20 12" fill="none" aria-hidden="true">
          <path d="M.5 2.500h11v7h-11z" stroke={B} />
          <path d="M15 1.500h4M15 10.500h4M17 1.500v9" stroke={K} />
        </svg>
      </div>
      <div className={clsx(cell, "w-5")} />
      <div className={clsx(cell, "w-5")} />
      <div className={clsx(cell, "flex-1 justify-center")}>Average: ; Sum: 0</div>
      <div className={clsx(cell, "w-24 justify-center gap-1")}>
        <button type="button" aria-label="Zoom out" onClick={() => setZoom(zoom - 10)} className="flex">
          <svg width="7" height="7" viewBox="0 0 7 7" aria-hidden="true">
            <path d="M0 3.500h7" stroke="#222" strokeWidth="1.5" />
          </svg>
        </button>
        <input
          type="range"
          aria-label="Zoom"
          min="20"
          max="180"
          value={zoom}
          onChange={(e) => setZoom(Number(e.target.value))}
          className="h-px w-[65px] appearance-none bg-[#8a8a8a] [&::-webkit-slider-thumb]:h-[7px] [&::-webkit-slider-thumb]:w-[3px] [&::-webkit-slider-thumb]:appearance-none [&::-webkit-slider-thumb]:border [&::-webkit-slider-thumb]:border-[#4a4a4a] [&::-webkit-slider-thumb]:bg-[#f6f5f4]"
        />
        <button type="button" aria-label="Zoom in" onClick={() => setZoom(zoom + 10)} className="flex">
          <svg width="7" height="7" viewBox="0 0 7 7" aria-hidden="true">
            <path d="M0 3.500h7M3.500 0v7" stroke="#222" strokeWidth="1.5" />
          </svg>
        </button>
      </div>
      <div className="flex w-[33px] shrink-0 justify-center">{zoom}%</div>
    </footer>
  );
}

const DECKS = [
  ["menu", "Sidebar settings"],
  ["properties", "Properties"],
  ["styles", "Styles"],
  ["gallery", "Gallery"],
  ["navigator", "Navigator"],
  ["fx", "Functions"],
];

function Sidebar() {
  return (
    <aside className="flex w-[39px] shrink-0 border-l border-[#dddbd9]">
      <button type="button" aria-label="Hide sidebar" className="mt-[268px] flex h-[50px] w-1 items-center bg-[#929595]">
        <svg width="4" height="6" viewBox="0 0 4 6" aria-hidden="true">
          <path d="M0 0l4 3l-4 3z" fill="#fff" />
        </svg>
      </button>
      <div className="flex flex-1 flex-col items-center pr-[3px]">
        {DECKS.map(([icon, label]) => (
          <button key={icon} type="button" aria-label={label} className="flex h-[29px] w-6 items-center justify-center">
            <Svg>{ICONS[icon]}</Svg>
          </button>
        ))}
      </div>
    </aside>
  );
}

export default function App() {
  return (
    <div className="flex h-screen flex-col overflow-hidden bg-[#f6f5f4] font-['Noto_Sans',sans-serif] text-[#3d3d3d]">
      <header className="shrink-0">
        <div className="flex h-[17px] items-center justify-between">
          <nav aria-label="Menu bar" className="flex gap-[11px] pl-[6px] text-[9px] leading-3">
            {MENUS.map((m) => (
              <button key={m} type="button">
                {m}
              </button>
            ))}
          </nav>
          <button type="button" aria-label="Close document" className="mr-2 flex">
            <svg width="6" height="6" viewBox="0 0 6 6" aria-hidden="true">
              <path d="M.5 .5l5 5M5.500 .5l-5 5" stroke="#222" strokeWidth="1.5" />
            </svg>
          </button>
        </div>
        <StandardBar />
        <FormattingBar />
      </header>

      <div className="flex min-h-0 flex-1">
        <main className="flex min-w-0 flex-1 flex-col">
          <FormulaBar />
          <div className="flex min-h-0 flex-1">
            <div className="flex min-w-0 flex-1 flex-col">
              <div className="min-h-0 flex-1 overflow-hidden bg-white">
                <Sheet />
              </div>
              <div className="flex h-[10px] shrink-0 items-center justify-between bg-[#cccccc] px-[2px]">
                <div className="h-[6px] w-[47%] rounded-full bg-[#808280]" />
                <div className="h-2 w-px bg-[#3d3d3d]" />
              </div>
            </div>
            <div className="mb-[10px] w-[9px] shrink-0 bg-[#cccccc] px-[2px] pt-px">
              <div className="h-px bg-[#3d3d3d]" />
              <div className="mt-[3px] h-[48%] rounded-full bg-[#808280]" />
            </div>
          </div>
          <SheetTabs />
        </main>
        <Sidebar />
      </div>
      <StatusBar />
    </div>
  );
}
